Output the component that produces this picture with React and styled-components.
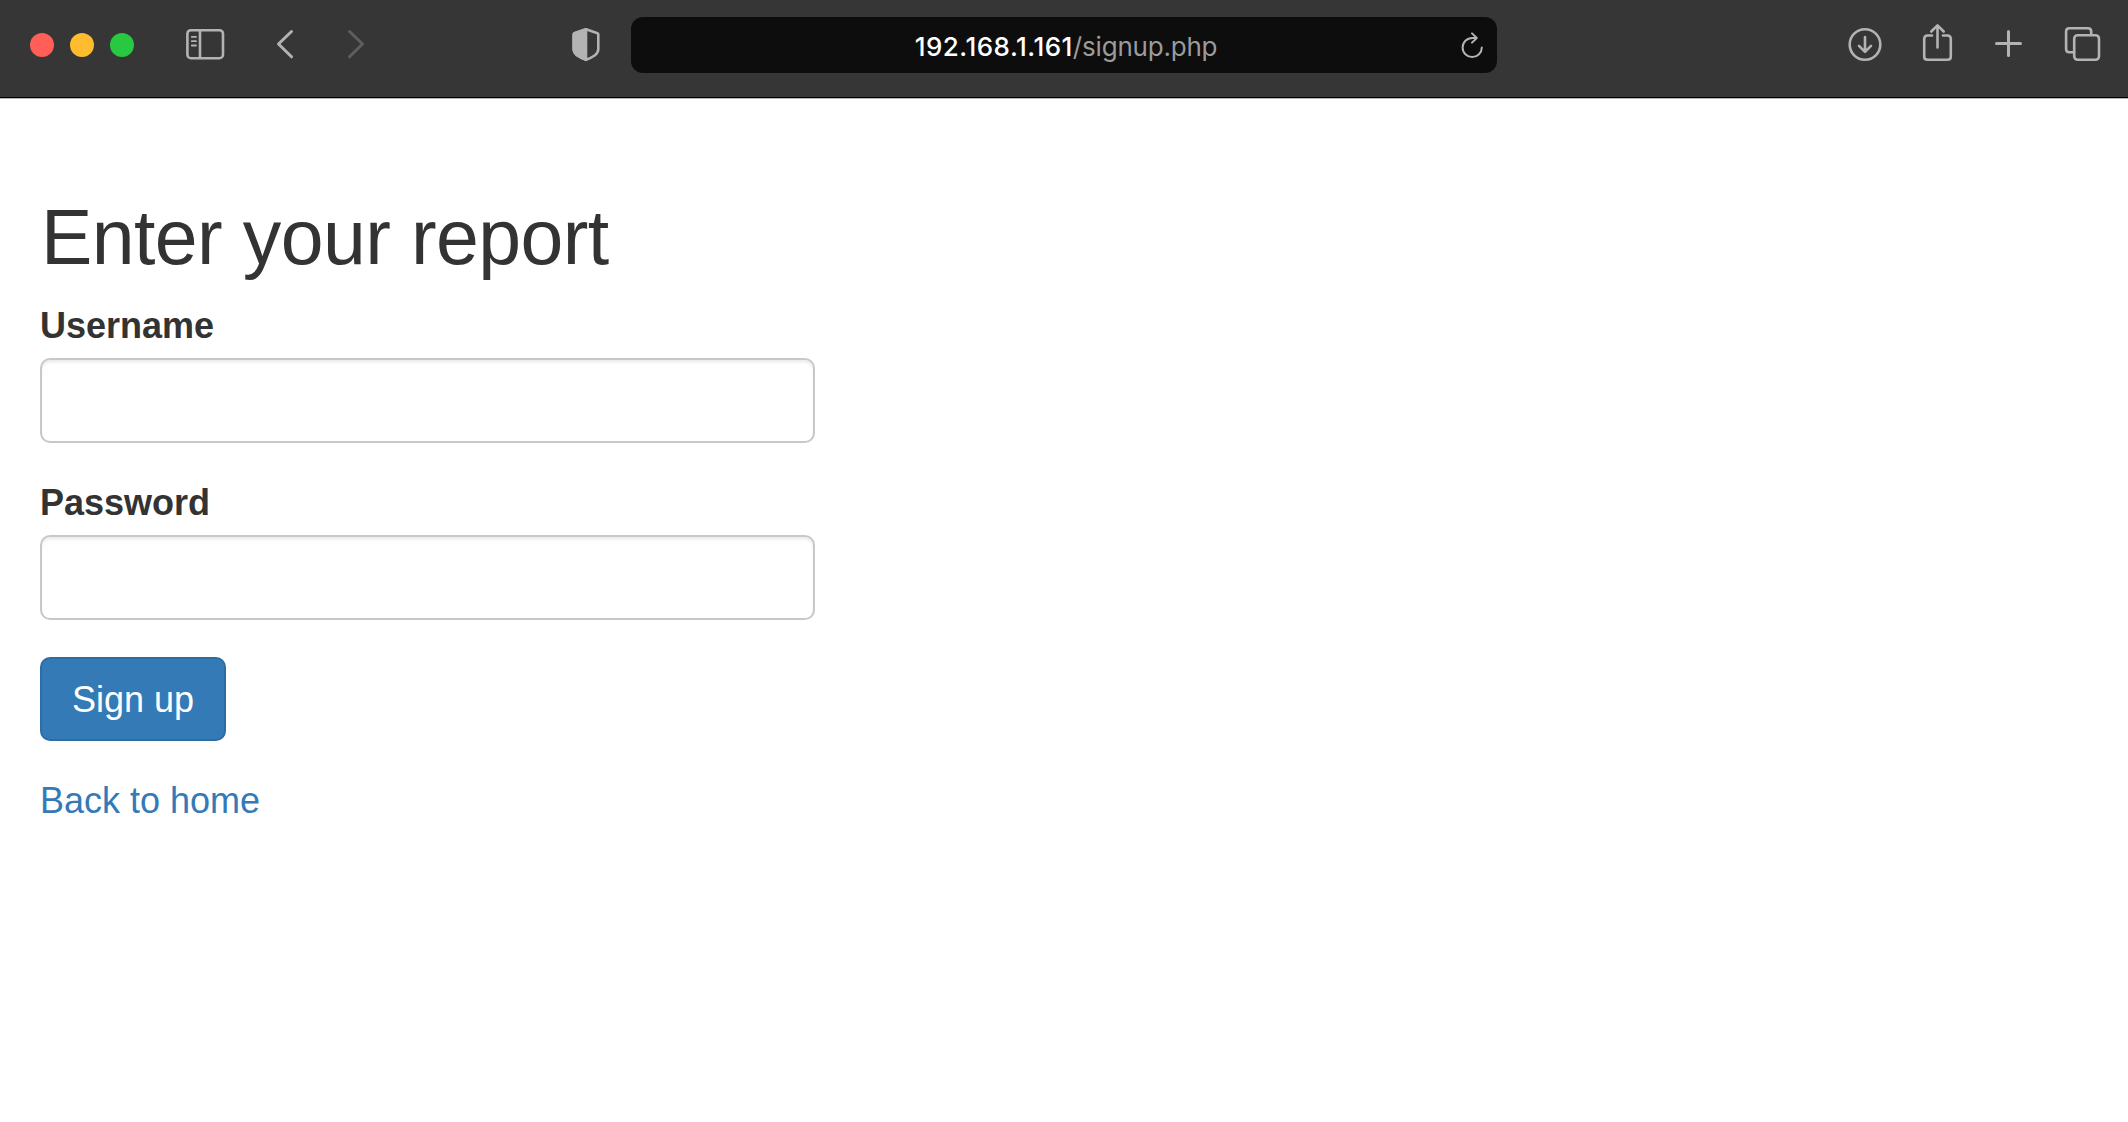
import React from "react";
import styled, { createGlobalStyle } from "styled-components";

const GlobalStyle = createGlobalStyle`
  *, *::before, *::after { box-sizing: border-box; }
  html, body { margin: 0; background: #fff; overflow: hidden; }
  body { font-family: "Liberation Sans", Arial, sans-serif; color: #333; }
`;

const Window = styled.div`
  display: flex;
  flex-direction: column;
  width: 100%;
  height: 100vh;
  background: #fff;
`;

const Toolbar = styled.header`
  display: flex;
  align-items: center;
  flex: none;
  height: 99px;
  padding: 0 22px 8px 30px;
  background: #363636;
  border-bottom: 1px solid #b4b4b4;
  box-shadow: inset 0 -1px 0 #000;
`;

const Lights = styled.div`
  display: flex;
  gap: 16px;
  margin-right: 46px;
`;

const Light = styled.span`
  width: 24px;
  height: 24px;
  border-radius: 50%;
  background: ${(p) => p.$color};
`;

const Group = styled.div`
  display: flex;
  align-items: center;
  gap: ${(p) => p.$gap}px;
  margin-left: ${(p) => p.$offset || 0}px;
`;

const IconButton = styled.button`
  display: flex;
  padding: 0;
  border: 0;
  background: none;
  color: ${(p) => (p.disabled ? "#5e5e5e" : "#b3b3b3")};
`;

const Glyph = styled.svg`
  display: block;
  width: ${(p) => p.$width || 40}px;
  height: 44px;
  fill: none;
  stroke: currentColor;
  stroke-width: 2.6;
  stroke-linecap: round;
  stroke-linejoin: round;
`;

const AddressBar = styled.div`
  display: grid;
  grid-template-columns: 45px 1fr 45px;
  align-items: center;
  flex: none;
  width: 866px;
  height: 56px;
  margin-left: 25px;
  border-radius: 12px;
  background: #0d0d0d;
`;

const Url = styled.div`
  grid-column: 2;
  padding: 4px 0 0 4px;
  font-family: Inter, sans-serif;
  font-size: 26px;
  line-height: 36px;
  text-align: center;
  white-space: nowrap;
  letter-spacing: -0.2px;
  color: #9b9b9b;
`;

const Host = styled.span`
  color: #fff;
  font-weight: 500;
  letter-spacing: 0.5px;
`;

const Page = styled.main`
  display: flex;
  flex-direction: column;
  align-items: flex-start;
  padding: 96px 40px 0;
`;

const Title = styled.h1`
  margin: 0 0 22px;
  padding-left: 1px;
  font-size: 77px;
  font-weight: 400;
  line-height: 84px;
  letter-spacing: -0.6px;
`;

const Form = styled.form`
  display: flex;
  flex-direction: column;
  align-items: flex-start;
  width: 775px;
`;

const Field = styled.div`
  display: flex;
  flex-direction: column;
  width: 100%;
  margin-bottom: ${(p) => p.$gap}px;
`;

const Label = styled.label`
  margin-bottom: 7px;
  font-size: 36px;
  font-weight: 700;
  line-height: 50px;
`;

const Input = styled.input`
  width: 100%;
  height: 85px;
  padding: 0 30px;
  border: 2px solid #c8c8c8;
  border-radius: 10px;
  background: #fff;
  box-shadow: inset 0 2.5px 2.5px rgba(0, 0, 0, 0.075);
  font: 36px "Liberation Sans", Arial, sans-serif;
  outline: none;
`;

const Submit = styled.button`
  width: 186px;
  height: 84px;
  margin-bottom: 35px;
  padding: 2px 0 0;
  border: 2px solid #2e6da4;
  border-radius: 10px;
  background: #337ab7;
  color: #fff;
  font: 36px/50px "Liberation Sans", Arial, sans-serif;
`;

const HomeLink = styled.a`
  color: #337ab7;
  font-size: 36px;
  line-height: 50px;
  text-decoration: none;
`;

const LIGHTS = ["#ff5f57", "#febc2e", "#28c840"];

function SidebarIcon() {
  return (
    <Glyph viewBox="0 0 50 44" $width={50}>
      <rect x="7.4" y="7.2" width="35.6" height="28" rx="3.5" />
      <path d="M20 7.5V35" />
      <path d="M11.8 13.9H16M11.8 18.2H16M11.8 22.5H16" strokeWidth="1.8" />
    </Glyph>
  );
}

function ChevronIcon({ forward }) {
  return (
    <Glyph viewBox="0 0 40 44">
      <path d={forward ? "M13.5 8.5L26.5 21L13.5 33.8" : "M26.5 8.5L13.5 21L26.5 33.8"} strokeWidth="3" />
    </Glyph>
  );
}

function ShieldIcon() {
  return (
    <Glyph viewBox="0 0 40 44">
      <path d="M20 6.3L31.5 10.2Q32.3 10.5 32.3 11.5V26Q32.3 29.5 29 32.2Q25 35 20 36.8Q15 35 11 32.2Q7.7 29.5 7.7 26V11.5Q7.7 10.5 8.5 10.2Z" />
      <path d="M20 6.3L8.5 10.2Q7.7 10.5 7.7 11.5V26Q7.7 29.5 11 32.2Q15 35 20 36.8Z" fill="currentColor" />
    </Glyph>
  );
}

function ReloadIcon() {
  return (
    <Glyph viewBox="0 0 40 44">
      <path d="M29.8 24.5A9.6 9.6 0 1 1 20.2 14.9H24" strokeWidth="2" />
      <path d="M20 10.400L24.8 15L20 19.6" strokeWidth="2" />
    </Glyph>
  );
}

function DownloadIcon() {
  return (
    <Glyph viewBox="0 0 40 44">
      <circle cx="20" cy="21.5" r="15.3" />
      <path d="M20 14V28.5M14 22.8L20 28.8L26 22.8" />
    </Glyph>
  );
}

function ShareIcon() {
  return (
    <Glyph viewBox="0 0 40 44">
      <path d="M15 12.5H10.5Q7.2 12.5 7.2 15.8V33.5Q7.2 36.8 10.5 36.8H30.5Q33.8 36.8 33.8 33.5V15.8Q33.8 12.5 30.5 12.5H26" />
      <path d="M20.5 24.5V2.5M14.3 8.5L20.5 2.3L26.7 8.5" />
    </Glyph>
  );
}

function PlusIcon() {
  return (
    <Glyph viewBox="0 0 40 44">
      <path d="M19.5 8.5V32.5M7.5 20.5H31.5" strokeWidth="3" />
    </Glyph>
  );
}

function TabsIcon() {
  return (
    <Glyph viewBox="0 0 42 44" $width={42}>
      <rect x="13.2" y="12.2" width="24.8" height="24.6" rx="3.5" />
      <path d="M30.200 12V8.500Q30.200 5.200 26.900 5.200H8.400Q5.100 5.200 5.100 8.500V26Q5.100 29.300 8.400 29.300H13" />
    </Glyph>
  );
}

export default function App() {
  return (
    <>
      <GlobalStyle />
      <Window>
        <Toolbar>
          <Lights>
            {LIGHTS.map((color) => (
              <Light key={color} $color={color} />
            ))}
          </Lights>
          <IconButton aria-label="Sidebar"><SidebarIcon /></IconButton>
          <Group $gap={31} $offset={35}>
            <IconButton aria-label="Back"><ChevronIcon /></IconButton>
            <IconButton aria-label="Forward" disabled><ChevronIcon forward /></IconButton>
          </Group>
          <Group $offset={190}>
            <IconButton aria-label="Privacy report"><ShieldIcon /></IconButton>
          </Group>
          <AddressBar>
            <Url><Host>192.168.1.161</Host>/signup.php</Url>
            <IconButton aria-label="Reload"><ReloadIcon /></IconButton>
          </AddressBar>
          <Group $gap={32} $offset={348}>
            <IconButton aria-label="Downloads"><DownloadIcon /></IconButton>
            <IconButton aria-label="Share"><ShareIcon /></IconButton>
            <IconButton aria-label="New tab"><PlusIcon /></IconButton>
            <IconButton aria-label="Tab overview"><TabsIcon /></IconButton>
          </Group>
        </Toolbar>
        <Page>
          <Title>Enter your report</Title>
          <Form onSubmit={(e) => e.preventDefault()}>
            <Field $gap={35}>
              <Label htmlFor="username">Username</Label>
              <Input id="username" type="text" />
            </Field>
            <Field $gap={37}>
              <Label htmlFor="password">Password</Label>
              <Input id="password" type="password" />
            </Field>
            <Submit type="submit">Sign up</Submit>
          </Form>
          <HomeLink href="#">Back to home</HomeLink>
        </Page>
      </Window>
    </>
  );
}
